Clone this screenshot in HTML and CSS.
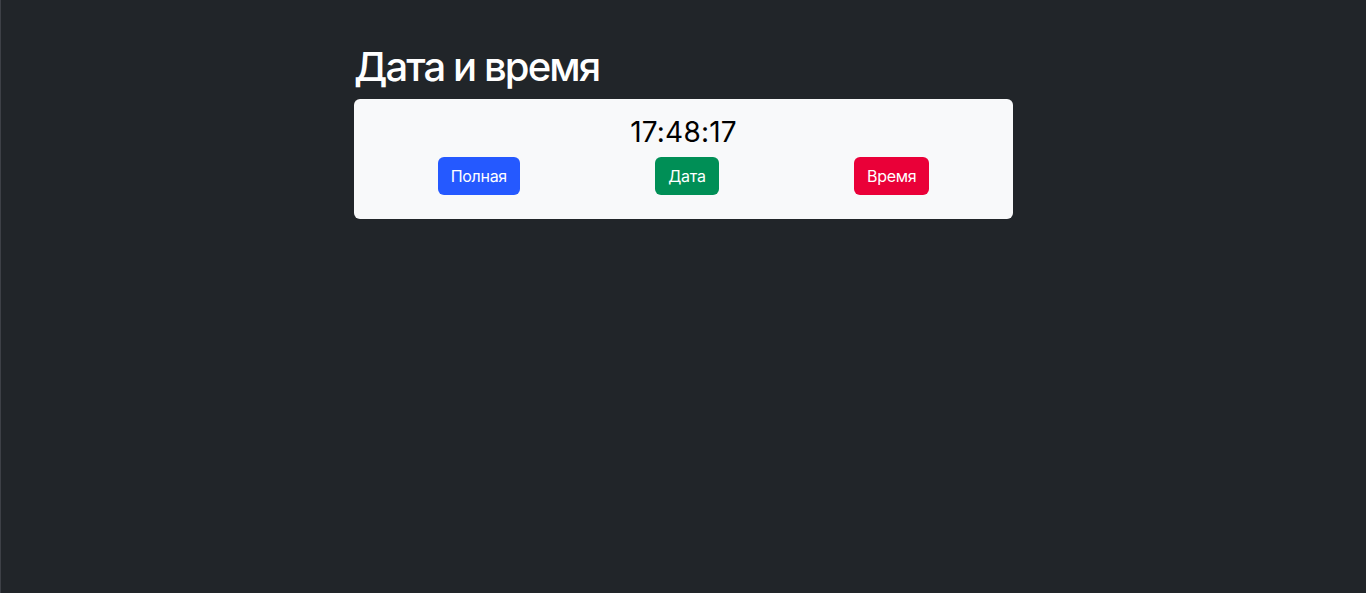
FILE: index.html
```html
<!DOCTYPE html>
<html lang="ru">
<head>
<meta charset="utf-8">
<title>Дата и время</title>
<link rel="stylesheet" href="styles.css">
</head>
<body>
<main class="wrap">
  <h1 class="title">Дата и время</h1>
  <section class="card">
    <h3 class="clock">17:48:17</h3>
    <div class="actions">
      <button class="btn btn-blue">Полная</button>
      <button class="btn btn-green">Дата</button>
      <button class="btn btn-red">Время</button>
    </div>
  </section>
</main>
</body>
</html>
```

FILE: styles.css
```css
html, body {
  margin: 0;
  padding: 0;
}
body {
  background: #212529;
  min-height: 100vh;
  box-sizing: border-box;
  border-left: 1px solid #3d4046;
  font-family: Inter, "Noto Sans", sans-serif;
  color: #fff;
}
.wrap {
  width: 659px;
  margin: 0 auto;
  padding-top: 43px;
}
.title {
  margin: 0 0 8px;
  font-size: 40px;
  line-height: 48px;
  font-weight: 500;
  letter-spacing: -1.9px;
  color: #fff;
}
.card {
  background: #f8f9fa;
  border-radius: 6px;
  padding: 16px 16px 24px;
  color: #000;
}
.clock {
  margin: 0 0 8px;
  text-align: center;
  font-size: 28px;
  line-height: 34px;
  font-weight: 400;
  letter-spacing: 0.2px;
}
.actions {
  display: flex;
  justify-content: space-around;
}
.btn {
  font-family: Inter, "Noto Sans", sans-serif;
  font-size: 16px;
  line-height: 24px;
  padding: 6px 12px;
  border: 1px solid transparent;
  border-radius: 6px;
  color: #fff;
  letter-spacing: -0.3px;
  cursor: pointer;
}
.btn-blue { background: #2559ff; }
.btn-green { background: #008f56; }
.btn-red { background: #ea0038; }
```
